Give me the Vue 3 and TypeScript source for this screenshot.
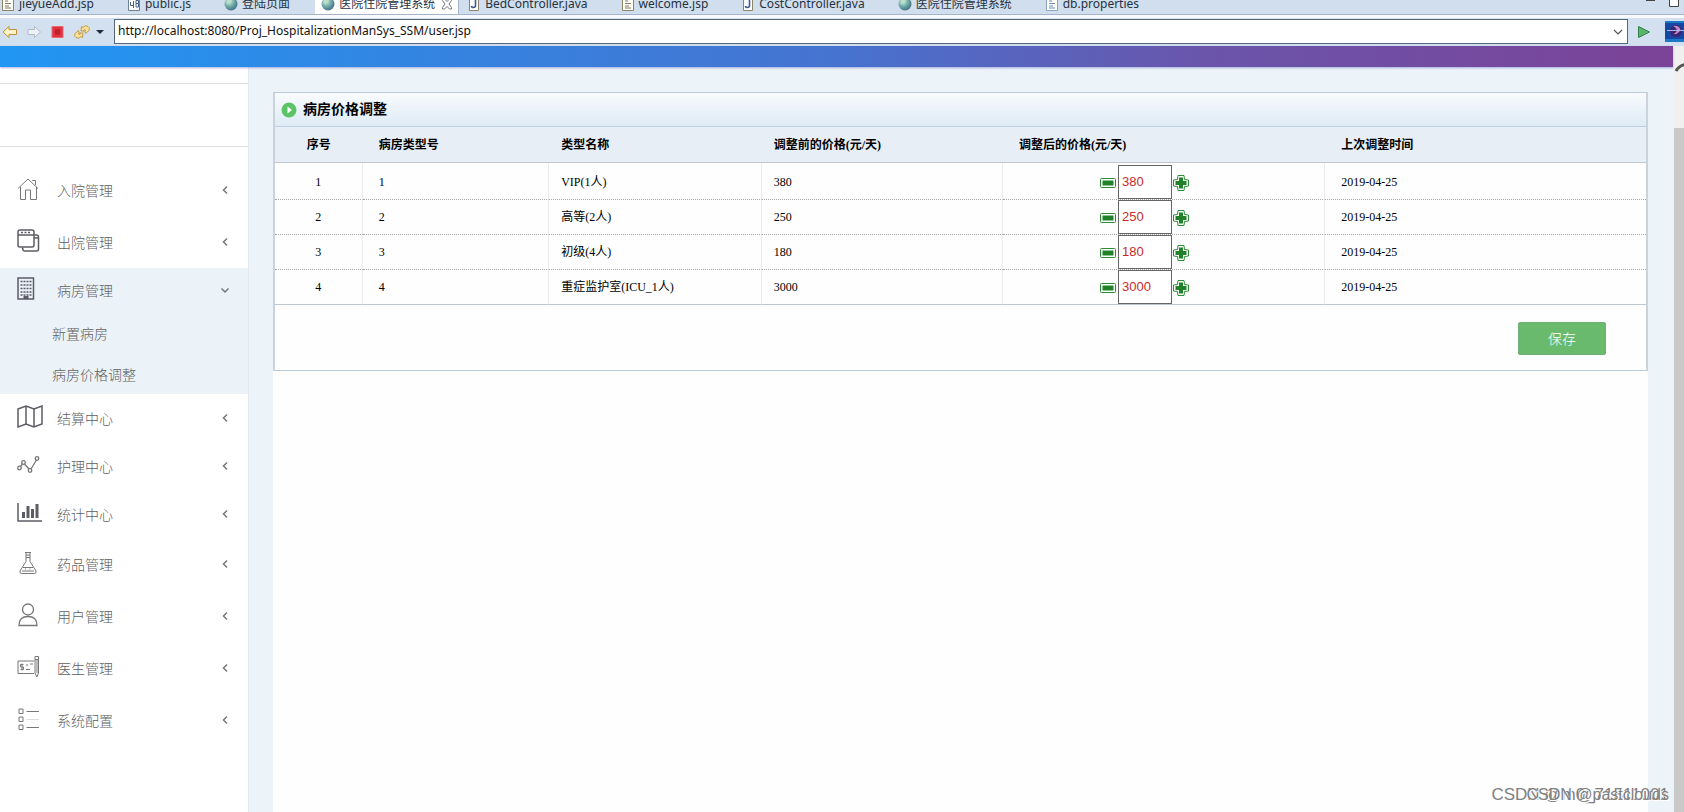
<script setup lang="ts">
import { ref } from 'vue'

interface Tab { label: string; icon: string; active?: boolean }
interface MenuItem { label: string; icon: string; size: string; children?: string[] }
interface Room { id: number; type: number; name: string; before: number; after: string; date: string }

const tabs: Tab[] = [
  { label: 'jieyueAdd.jsp', icon: 'page' },
  { label: 'public.js', icon: 'script' },
  { label: '登陆页面', icon: 'globe' },
  { label: '医院住院管理系统', icon: 'globe', active: true },
  { label: 'BedController.java', icon: 'java' },
  { label: 'welcome.jsp', icon: 'page' },
  { label: 'CostController.java', icon: 'java' },
  { label: '医院住院管理系统', icon: 'globe' },
  { label: 'db.properties', icon: 'text' },
]

const menu: MenuItem[] = [
  { label: '入院管理', icon: 'home', size: 'tall' },
  { label: '出院管理', icon: 'windows', size: 'tall' },
  { label: '病房管理', icon: 'building', size: 'short', children: ['新置病房', '病房价格调整'] },
  { label: '结算中心', icon: 'map', size: 'mid' },
  { label: '护理中心', icon: 'line', size: 'mid' },
  { label: '统计中心', icon: 'bars', size: 'mid' },
  { label: '药品管理', icon: 'flask', size: 'tall' },
  { label: '用户管理', icon: 'user', size: 'tall' },
  { label: '医生管理', icon: 'card', size: 'tall' },
  { label: '系统配置', icon: 'list', size: 'tall' },
]

const rooms = ref<Room[]>([
  { id: 1, type: 1, name: 'VIP(1人)', before: 380, after: '380', date: '2019-04-25' },
  { id: 2, type: 2, name: '高等(2人)', before: 250, after: '250', date: '2019-04-25' },
  { id: 3, type: 3, name: '初级(4人)', before: 180, after: '180', date: '2019-04-25' },
  { id: 4, type: 4, name: '重症监护室(ICU_1人)', before: 3000, after: '3000', date: '2019-04-25' },
])

const url = ref('http://localhost:8080/Proj_HospitalizationManSys_SSM/user.jsp')

function step(room: Room, delta: number) {
  room.after = String(Number(room.after) + delta)
}
</script>

<template>
  <div class="shell">
    <div class="tabstrip">
      <div class="tabs">
        <button v-for="(t, i) in tabs" :key="i" type="button" class="tab" :class="{ on: t.active }">
          <svg v-if="t.icon === 'globe'" class="tab-icon" viewBox="0 0 14 14">
            <defs>
              <radialGradient id="globe" cx="0.35" cy="0.3" r="0.8">
                <stop offset="0" stop-color="#d8efe6" />
                <stop offset="0.5" stop-color="#6fa9a6" />
                <stop offset="1" stop-color="#3c6480" />
              </radialGradient>
            </defs>
            <circle cx="7" cy="7" r="6.5" fill="url(#globe)" />
            <path d="M3 5q2-3 5-2q-1 3-4 4z" fill="#b9e0c4" />
          </svg>
          <svg v-else-if="t.icon === 'java'" class="tab-icon" viewBox="0 0 14 14">
            <path d="M2.5.5h9v13h-9z" fill="#fff" stroke="#8a8468" />
            <path d="M8.5 3v5.5q0 2-2 2t-2-1.500" fill="none" stroke="#3b5a94" stroke-width="1.6" />
          </svg>
          <svg v-else-if="t.icon === 'script'" class="tab-icon" viewBox="0 0 14 14">
            <path d="M1.500.5h11v13h-11z" fill="#fff" stroke="#6f7f96" />
            <path d="M3.500 5v3.500H6.500M6.500 4v7M9 3.500h2.500v3H9zM9 6.500v3.500h2.500V6.500" fill="none" stroke="#46618e" />
          </svg>
          <svg v-else class="tab-icon" viewBox="0 0 14 14">
            <path d="M1.500.5h11v13h-11z" fill="#fdfdf6" :stroke="t.icon === 'text' ? '#8fa3c0' : '#8a8468'" />
            <path d="M4 4h3M4 6.500h6M4 9h4M4 11h6" fill="none" :stroke="t.icon === 'text' ? '#6f8fbd' : '#8a7866'" />
          </svg>
          <span>{{ t.label }}</span>
          <svg v-if="t.active" class="tab-close" viewBox="0 0 12 12">
            <path d="M1.500 1h2L6 3.500 8.500 1h2v1.500L8 6l2.500 3.500V11h-2L6 8.500 3.500 11h-2V9.500L4 6 1.500 2.500z" fill="#fff" stroke="#777" />
          </svg>
        </button>
      </div>
      <svg class="win" viewBox="0 0 40 14">
        <path d="M2 7h9" stroke="#444" stroke-width="2" />
        <path d="M25.500 4.500h9v9h-9z" fill="#fff" stroke="#444" />
      </svg>
    </div>

    <div class="toolbar">
      <button type="button" class="tool" aria-label="Back">
        <svg viewBox="0 0 16 14"><path d="M1 7l6-5.500v3h7.500v5H7v3z" fill="#fdf3c4" stroke="#b8923c" stroke-linejoin="round" /></svg>
      </button>
      <button type="button" class="tool" aria-label="Forward">
        <svg viewBox="0 0 16 14"><path d="M14.500 7l-6-5.500v3H2v5h6.500v3z" fill="#eef1f7" stroke="#b3bbc9" stroke-linejoin="round" /></svg>
      </button>
      <button type="button" class="tool" aria-label="Stop">
        <svg viewBox="0 0 16 14"><path d="M2 1.500h11v11H2z" fill="#e2313c" stroke="#ea6a72" /><path d="M5 4.500h5v5H5z" fill="#b8202c" /></svg>
      </button>
      <button type="button" class="tool" aria-label="Refresh">
        <svg viewBox="0 0 16 14">
          <path d="M7 6l.5-4.500L9 2.500Q11-.5 14 1.500T13.500 7l-2 1.500-.5-2 .5-1.500-1-.5-1 .5 1 1z" fill="#fbe29a" stroke="#c39a44" />
          <path d="M9 8l-.5 4.500L7 11.500q-2 3-5 1T2.500 7l2-1.500.5 2L4.500 9l1 .5 1-.5-1-1z" fill="#fbe29a" stroke="#c39a44" />
        </svg>
      </button>
      <button type="button" class="tool caret" aria-label="Menu">
        <svg viewBox="0 0 8 14"><path d="M0 5h8L4 9z" fill="#1c2c40" /></svg>
      </button>
      <div class="address">
        <input v-model="url" type="text" class="url" aria-label="URL" />
        <button type="button" class="drop" aria-label="History">
          <svg viewBox="0 0 10 6"><path d="M1 1l4 4 4-4" fill="none" stroke="#555" stroke-width="1.200" /></svg>
        </button>
      </div>
      <button type="button" class="go" aria-label="Go">
        <svg viewBox="0 0 14 14"><path d="M1.500 1.500l11 5.500-11 5.500z" fill="#5db56b" stroke="#2f8046" stroke-linejoin="round" /></svg>
      </button>
      <svg class="brand" viewBox="0 0 19 21">
        <path d="M0 0h19v21H0z" fill="#1747a4" />
        <path d="M0 0h19v2H0zM0 18h19v3H0z" fill="#1e78c8" />
        <circle cx="11" cy="10" r="6" fill="#3a2470" />
        <path d="M8 5q6-1 7.500 4-3 5-7 4 4-2 3-5-1-2-3.500-3z" fill="#c48bc8" />
        <path d="M2 9.500h17" stroke="#a9b8ea" />
      </svg>
    </div>

    <div class="view">
      <div class="page">
        <header class="banner"></header>
        <div class="body">
          <aside class="side">
            <div class="side-top"></div>
            <div class="side-user"></div>
            <nav class="menu">
              <div v-for="m in menu" :key="m.label" class="group" :class="{ open: m.children }">
                <a href="#" class="item" :class="m.size">
                  <svg class="icon" viewBox="0 0 26 24">
                    <g v-if="m.icon === 'home'">
                      <path d="M1 11.500L11 2l10 9.500M3.500 10v12.500h5V13h5v9.500h6V10M15.500 4V3.500h3V8" />
                    </g>
                    <g v-else-if="m.icon === 'windows'" class="bold">
                      <rect x="1" y="1" width="16" height="17" rx="2" />
                      <path d="M1 6h16M17 6h2.500q2 0 2 2v12q0 2-2 2H8q-2.500 0-2.500-3.500M17 9h4.500M4 3.500h2M7.500 3.500h2M11 3.500h2" />
                    </g>
                    <g v-else-if="m.icon === 'building'" class="bold">
                      <path d="M1 1h15.500v21H1z" />
                      <path d="M3.500 4.500h11M3.500 8h11M3.500 11.500h11M3.500 15h11M3.500 18h11" stroke-dasharray="2 1" />
                      <path d="M6.500 19h5v3h-5z" class="solid" />
                    </g>
                    <g v-else-if="m.icon === 'map'" class="bold">
                      <path d="M1 4l8-3 8 3 8-3v18l-8 3-8-3-8 3z" />
                      <path d="M9 1v18M17 4v18" />
                    </g>
                    <g v-else-if="m.icon === 'line'" class="med">
                      <circle cx="2.500" cy="15" r="1.800" /><circle cx="6.500" cy="9.500" r="1.800" />
                      <circle cx="13" cy="17.500" r="1.800" /><circle cx="20" cy="5.500" r="1.800" />
                      <path d="M3.500 13.500L5.500 11M7.500 11l4.500 5M14 16l5.500-9" />
                    </g>
                    <g v-else-if="m.icon === 'bars'" class="bold">
                      <path d="M1 2v18h24" />
                      <path d="M5 11h3v6H5zM9.500 5h3v12h-3zM14 8h3v9h-3zM18.500 3h3v14h-3z" class="solid" />
                    </g>
                    <g v-else-if="m.icon === 'flask'">
                      <path d="M8 1.500h6M9 1.500v9L3 20q-.5 2.500 1.500 2.500h13q2 0 1.500-2.500l-6-9.500v-9M9 4h4M9 6.500h4M6 16.500h10M5 20h12" />
                      <path d="M8 18h1M12.500 18h1" />
                    </g>
                    <g v-else-if="m.icon === 'user'" class="med">
                      <circle cx="11" cy="6.500" r="5.500" />
                      <path d="M2 22.500q0-9 9-9t9 9z" />
                    </g>
                    <g v-else-if="m.icon === 'card'">
                      <path d="M17 6H1v12.500h16M5 8.500v7M6.500 9.500H3.500v2.500h3v2.500H3.500M9 10h2M13 9h3M9 14.500h4" />
                      <path d="M18 1.500h3.500V18l-1.700 4-1.800-4zM18 4.500h3.500M20 5v13" />
                    </g>
                    <g v-else>
                      <path d="M2 2h4v4.500H2zM2 10h4v4.500H2zM2 18h4v4.500H2zM9.500 4.500H22M9.500 20.500H22" />
                      <path d="M9.500 12.500H22" opacity="0.250" />
                    </g>
                  </svg>
                  <span class="label">{{ m.label }}</span>
                  <svg class="chev" viewBox="0 0 10 10">
                    <path v-if="m.children" d="M1.500 3.500L5 7l3.500-3.500" />
                    <path v-else d="M7 1.500L3.500 5 7 8.500" />
                  </svg>
                </a>
                <a v-for="c in m.children" :key="c" href="#" class="sub">{{ c }}</a>
              </div>
            </nav>
          </aside>

          <main class="main">
            <div class="sheet">
              <section class="card">
                <h1 class="title">
                  <svg class="play" viewBox="0 0 16 16">
                    <circle cx="8" cy="8" r="7.500" fill="#5cc467" />
                    <path d="M6.500 4.500L11 8l-4.500 3.500z" fill="#fff" />
                  </svg>
                  病房价格调整
                </h1>
                <table class="grid">
                  <colgroup>
                    <col class="c1" /><col class="c2" /><col class="c3" /><col class="c4" /><col class="c5" /><col class="c6" />
                  </colgroup>
                  <thead>
                    <tr>
                      <th class="mid-cell">序号</th><th>病房类型号</th><th class="near">类型名称</th>
                      <th class="near">调整前的价格(元/天)</th><th>调整后的价格(元/天)</th><th>上次调整时间</th>
                    </tr>
                  </thead>
                  <tbody>
                    <tr v-for="r in rooms" :key="r.id">
                      <td class="mid-cell">{{ r.id }}</td>
                      <td>{{ r.type }}</td>
                      <td class="near">{{ r.name }}</td>
                      <td class="near">{{ r.before }}</td>
                      <td class="edit">
                        <div class="stepper">
                          <button type="button" class="step" aria-label="减少" @click="step(r, -10)">
                            <svg viewBox="0 0 16 16">
                              <rect x="0.5" y="3.500" width="15" height="9" rx="1" fill="#fff" stroke="#2d8a35" />
                              <path d="M2.500 5.500h11v5h-11z" fill="#1f8128" />
                            </svg>
                          </button>
                          <input v-model="r.after" type="text" class="price" :aria-label="r.name + ' 调整后的价格'" />
                          <button type="button" class="step" aria-label="增加" @click="step(r, 10)">
                            <svg viewBox="0 0 16 16">
                              <path d="M5 .5h6l.5 4 4 .5v6l-4 .5-.5 4H5l-.5-4-4-.5V5l4-.5z" fill="#fff" stroke="#2d8a35" />
                              <path d="M6 2.500h4V6h3.500v4H10v3.500H6V10H2.500V6H6z" fill="#1f8128" />
                            </svg>
                          </button>
                        </div>
                      </td>
                      <td>{{ r.date }}</td>
                    </tr>
                  </tbody>
                </table>
                <div class="foot">
                  <button type="button" class="save">保存</button>
                </div>
              </section>
            </div>
          </main>
        </div>
      </div>
      <div class="scroll">
        <svg class="scroll-up" viewBox="0 0 11 16"><path d="M3 14Q6 8.500 12 7.500" fill="none" stroke="#555" stroke-width="3" /></svg>
        <div class="thumb"></div>
      </div>
    </div>

    <div class="mark">
      <span class="mark-a">CSDN @m0_71511001</span>
      <span class="mark-b">CSDN @pastclouds</span>
    </div>
  </div>
</template>

<style>
html, body { margin: 0; height: 100%; }
#app { height: 100%; }
</style>

<style scoped>
* { box-sizing: border-box; }
button { border: 0; padding: 0; background: none; font: inherit; color: inherit; cursor: pointer; }
.shell {
  position: relative; display: flex; flex-direction: column; height: 100vh; overflow: hidden;
  font-family: "Noto Sans", "Noto Sans CJK SC", sans-serif; font-size: 12px; color: #111;
}
.tabstrip {
  display: flex; justify-content: space-between; align-items: flex-end; flex: none;
  height: 15px; overflow: hidden; background: #d0deed; border-bottom: 1px solid #a2b5cc;
}
.tabs { display: flex; }
.tab { display: flex; align-items: center; height: 21px; padding: 0 25px 0 8px; white-space: nowrap; line-height: 20px; color: #26323f; }
.tab:first-child { padding-left: 1px; }
.tab.on { padding: 0 5px 0 6px; background: #fff; border-right: 1px solid #a2b5cc; }
.tab-icon { width: 14px; height: 14px; margin-right: 4px; }
.tab-close { width: 12px; height: 12px; margin-left: 6px; }
.win { width: 40px; height: 14px; margin-bottom: 7px; }
.toolbar {
  display: flex; align-items: center; flex: none; height: 31px; padding-bottom: 1px;
  background: #d3e0ef; border-top: 3px solid #f8fafd;
}
.tool { width: 16px; height: 14px; margin: 0 6px 0 2px; }
.tool svg, .step svg, .go svg { display: block; width: 100%; height: 100%; }
.tool.caret { width: 8px; margin: 0 10px 0 0; }
.address { display: flex; flex: 1; height: 25px; border: 1px solid #55657a; background: #fff; }
.url { flex: 1; min-width: 0; padding: 0 3px 2px; border: 0; outline: 0; font: inherit; color: #111; background: none; }
.drop { width: 18px; display: flex; align-items: center; justify-content: center; }
.drop svg { width: 10px; height: 6px; }
.go { width: 14px; height: 14px; margin: 0 14px 0 9px; }
.brand { width: 19px; height: 21px; }

.view { display: flex; flex: 1; min-height: 0; }
.page { flex: 1; min-width: 0; display: flex; flex-direction: column; }
.banner {
  position: relative; flex: none; height: 21px; background: linear-gradient(90deg, #2196f3, #4673d0 50%, #6a55ab 72%, #7b4397);
  box-shadow: 0 1px 2px rgba(90, 100, 190, 0.5);
}
.body { flex: 1; min-height: 0; display: flex; background: #ecf3f9; }
.side { flex: none; width: 249px; background: #fff; border-right: 1px solid #e3e9ef; }
.side-top { height: 17px; border-bottom: 1px solid #dcdfe2; }
.side-user { height: 63px; border-bottom: 1px solid #dcdfe2; }
.menu { padding-top: 17px; font-size: 14px; font-weight: 300; color: #606060; }
.group.open { background: #ebf3f8; }
.item { display: flex; align-items: center; padding: 2px 17px 0 17px; color: inherit; text-decoration: none; }
.tall { height: 52px; }
.mid { height: 48px; }
.short { height: 44px; }
.icon { width: 26px; height: 24px; margin: 0 14px 4px 0; fill: none; stroke: #777; stroke-width: 1; }
.bold { stroke: #5c5c66; stroke-width: 1.500; }
.med { stroke-width: 1.300; }
.solid { fill: #5c5c66; stroke: none; }
.label { flex: 1; line-height: 20px; }
.chev { width: 10px; height: 10px; margin: 0 1px 2px 0; fill: none; stroke: #777; stroke-width: 1.500; }
.sub { display: flex; align-items: center; height: 41px; padding-left: 52px; color: inherit; text-decoration: none; }

.main { flex: 1; min-width: 0; padding: 25px 25px 0 24px; }
.sheet { height: 100%; background: #fefefe; }
.card { border: 1px solid #bccbd8; border-left: 2px solid #c8d3de; border-right: 2px solid #c8d3de; font-family: "Liberation Serif", "Noto Sans CJK SC", serif; color: #000; }
.title {
  display: flex; align-items: center; height: 34px; margin: 0; padding-left: 6px; font-size: 14px; line-height: 20px;
  background: linear-gradient(#f8fbfd, #dfebf5); border-bottom: 1px solid #bcd0e0;
}
.play { width: 16px; height: 16px; margin-right: 6px; }
.grid { width: 100%; border-collapse: separate; border-spacing: 0; table-layout: fixed; font-size: 12px; line-height: 18px; }
.c1 { width: 6.400%; }
.c2 { width: 13.600%; }
.c3 { width: 15.500%; }
.c4 { width: 17.600%; }
.c5 { width: 23.500%; }
.grid th { height: 36px; padding: 0 0 0 16px; text-align: left; background: #e7eef6; border-bottom: 1px solid #c1c8d0; }
.grid td { height: 35px; padding: 0 0 0 16px; border-bottom: 1px dotted #a8a8a8; border-right: 1px solid #ececec; }
.grid td:last-child { border-right: 0; }
.grid tr:first-child td { height: 37px; padding-top: 2px; }
.grid tr:last-child td { border-bottom: 1px solid #c0c8d2; }
.grid .mid-cell { padding-left: 0; text-align: center; }
.grid .near { padding-left: 12px; }
.grid td.edit { padding-left: 0; padding-right: 38px; }
.stepper { display: flex; align-items: center; justify-content: center; height: 34px; gap: 1px; }
.step { width: 16px; height: 16px; margin-top: 2px; }
.price {
  width: 54px; height: 34px; margin-left: 1px; padding: 0 2px 2px 3px; border: 1px solid #666; border-radius: 0; background: #fff;
  font-family: "Liberation Sans", sans-serif; font-size: 13px; color: #cb2a2a; outline: 0;
}
.foot { display: flex; justify-content: flex-end; padding: 17px 40px 15px; }
.save {
  width: 88px; height: 33px; padding-bottom: 2px; border: 1px solid #70b078; border-radius: 2px; background: #6aba6e; color: #fff;
  font-family: "Noto Sans CJK SC", sans-serif; font-size: 14px; font-weight: 300;
}
.scroll { flex: none; width: 11px; display: flex; flex-direction: column; background: #f0f0f0; }
.scroll-up { flex: none; width: 11px; height: 16px; margin: 11px 0 55px; }
.thumb { flex: 1; margin-left: 1px; background: #c9c9c9; }
.mark {
  position: absolute; right: 15px; bottom: 7px; display: grid; justify-items: end; align-items: center;
  font-family: "Liberation Sans", sans-serif; color: #808080; pointer-events: none; white-space: nowrap;
}
.mark span { grid-area: 1 / 1; text-shadow: 1px 1px 0 #fff; }
.mark-a { font-size: 17px; }
.mark-b { font-size: 16px; }
</style>
